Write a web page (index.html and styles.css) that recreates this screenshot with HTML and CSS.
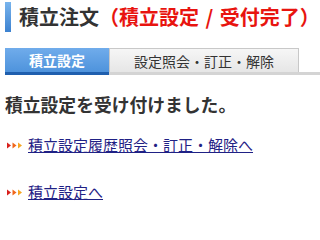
FILE: index.html
```html
<!DOCTYPE html>
<html lang="ja">
<head>
<meta charset="utf-8">
<link rel="stylesheet" href="styles.css">
</head>
<body>
<div class="page">
  <h1 class="title">積立注文<span class="status">（積立設定 / 受付完了）</span></h1>
  <div class="tabs">
    <div class="tab active">積立設定</div>
    <div class="tab">設定照会・訂正・解除</div>
  </div>
  <p class="message">積立設定を受け付けました。</p>
  <ul class="links">
    <li class="link-item">
      <svg class="arrows" width="16" height="7" viewBox="0 0 16 7">
        <polygon points="0,0.5 4,3.5 0,6.5" fill="#d8201c"/>
        <polygon points="5.5,0.5 9.5,3.5 5.5,6.5" fill="#f0661a"/>
        <polygon points="11,0.5 15,3.5 11,6.5" fill="#f6a623"/>
      </svg>
      <a href="#">積立設定履歴照会・訂正・解除へ</a>
    </li>
    <li class="link-item">
      <svg class="arrows" width="16" height="7" viewBox="0 0 16 7">
        <polygon points="0,0.5 4,3.5 0,6.5" fill="#d8201c"/>
        <polygon points="5.5,0.5 9.5,3.5 5.5,6.5" fill="#f0661a"/>
        <polygon points="11,0.5 15,3.5 11,6.5" fill="#f6a623"/>
      </svg>
      <a href="#">積立設定へ</a>
    </li>
  </ul>
</div>
</body>
</html>
```
FILE: styles.css
```css
html, body {
  margin: 0;
  padding: 0;
  background: #fff;
}
body {
  font-family: "Noto Sans CJK JP", "Noto Sans", sans-serif;
  color: #333;
}
.page {
  padding: 2px 0 0 5px;
}
.title {
  margin: 0;
  height: 30px;
  line-height: 30px;
  font-size: 20px;
  font-weight: bold;
  color: #333;
  border-left: 6px solid #4a8fd8;
  padding-left: 8px;
  white-space: nowrap;
  border-image: linear-gradient(#7bb6ee, #3a80cf) 1;
}
.status {
  color: #e8140f;
  word-spacing: 2px;
}
.tabs {
  margin-top: 16px;
  display: flex;
  border-bottom: 3px solid #d4d4d4;
  height: 24px;
}
.tab {
  box-sizing: border-box;
  height: 24px;
  font-size: 14px;
  line-height: 24px;
  padding-top: 1px;
  text-align: center;
  color: #333;
}
.tab.active {
  width: 104px;
  background: linear-gradient(#70aceb, #4e93dc);
  color: #fff;
  font-weight: bold;
  height: 27px;
  border-bottom: 3px solid #1f5fae;
  padding-top: 0;
}
.tab:not(.active) {
  width: 190px;
  background: linear-gradient(#f6f6f6, #e6e6e6);
  border: 1px solid #c8c8c8;
  border-bottom: none;
  line-height: 23px;
}
.message {
  margin: 17px 0 0 0;
  font-size: 17.8px;
  line-height: 24px;
  font-weight: bold;
  color: #333;
}
.links {
  list-style: none;
  margin: 19px 0 0 0;
  padding: 0;
  display: flex;
  flex-direction: column;
  gap: 27px;
}
.link-item {
  display: flex;
  align-items: center;
  gap: 5px;
  height: 20px;
  padding-left: 2px;
}
.arrows {
  flex: none;
}
.link-item a {
  font-size: 15px;
  line-height: 20px;
  color: #1f2185;
  text-decoration: underline;
}
```
